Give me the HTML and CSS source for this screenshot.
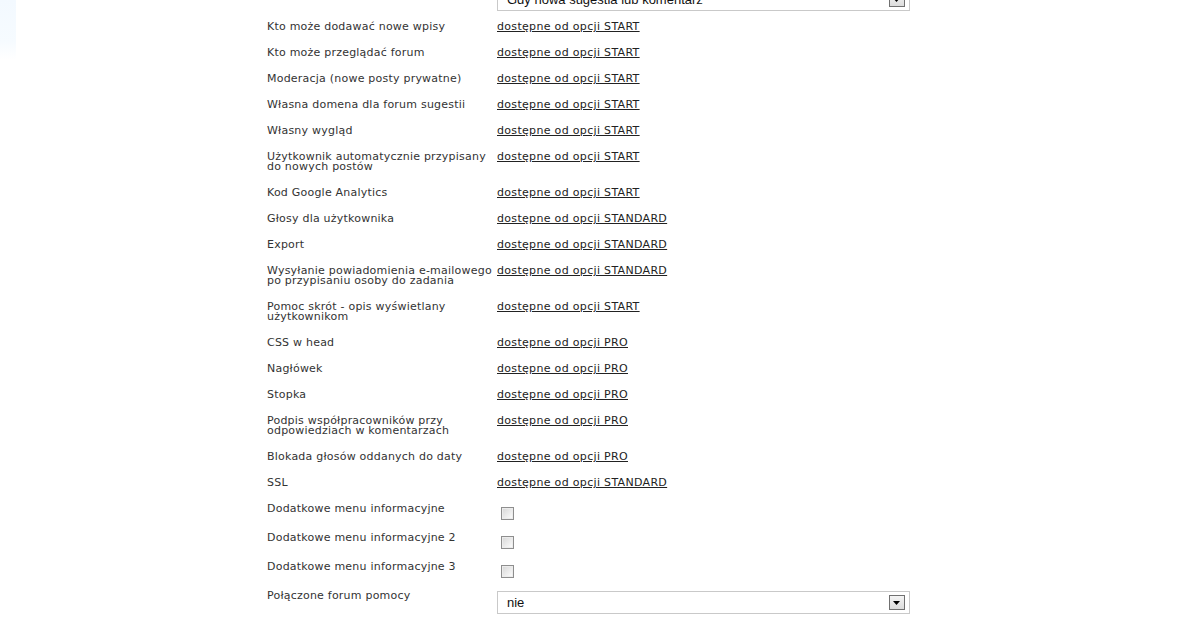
FILE: index.html
```html
<!DOCTYPE html>
<html lang="pl">
<head>
<meta charset="utf-8">
<title>Ustawienia forum</title>
<link rel="stylesheet" href="styles.css">
</head>
<body>
<div class="page">
  <div class="strip"></div>
  <div class="content">
    <div class="row row-select">
      <div class="label">Powiadomienia e-mail</div>
      <div class="value">
        <div class="select"><span class="select-text">Gdy nowa sugestia lub komentarz</span><span class="select-btn"><svg width="8" height="5" viewBox="0 0 8 5"><path d="M0 0h7L3.5 4z" fill="#000"/></svg></span></div>
      </div>
    </div>
    <div class="row"><div class="label">Kto może dodawać nowe wpisy</div><div class="value"><a href="#">dostępne od opcji START</a></div></div>
    <div class="row"><div class="label">Kto może przeglądać forum</div><div class="value"><a href="#">dostępne od opcji START</a></div></div>
    <div class="row"><div class="label">Moderacja (nowe posty prywatne)</div><div class="value"><a href="#">dostępne od opcji START</a></div></div>
    <div class="row"><div class="label">Własna domena dla forum sugestii</div><div class="value"><a href="#">dostępne od opcji START</a></div></div>
    <div class="row"><div class="label">Własny wygląd</div><div class="value"><a href="#">dostępne od opcji START</a></div></div>
    <div class="row"><div class="label">Użytkownik automatycznie przypisany<br>do nowych postów</div><div class="value"><a href="#">dostępne od opcji START</a></div></div>
    <div class="row"><div class="label">Kod Google Analytics</div><div class="value"><a href="#">dostępne od opcji START</a></div></div>
    <div class="row"><div class="label">Głosy dla użytkownika</div><div class="value"><a href="#">dostępne od opcji STANDARD</a></div></div>
    <div class="row"><div class="label">Export</div><div class="value"><a href="#">dostępne od opcji STANDARD</a></div></div>
    <div class="row"><div class="label">Wysyłanie powiadomienia e-mailowego<br>po przypisaniu osoby do zadania</div><div class="value"><a href="#">dostępne od opcji STANDARD</a></div></div>
    <div class="row"><div class="label">Pomoc skrót - opis wyświetlany<br>użytkownikom</div><div class="value"><a href="#">dostępne od opcji START</a></div></div>
    <div class="row"><div class="label">CSS w head</div><div class="value"><a href="#">dostępne od opcji PRO</a></div></div>
    <div class="row"><div class="label">Nagłówek</div><div class="value"><a href="#">dostępne od opcji PRO</a></div></div>
    <div class="row"><div class="label">Stopka</div><div class="value"><a href="#">dostępne od opcji PRO</a></div></div>
    <div class="row"><div class="label">Podpis współpracowników przy<br>odpowiedziach w komentarzach</div><div class="value"><a href="#">dostępne od opcji PRO</a></div></div>
    <div class="row"><div class="label">Blokada głosów oddanych do daty</div><div class="value"><a href="#">dostępne od opcji PRO</a></div></div>
    <div class="row"><div class="label">SSL</div><div class="value"><a href="#">dostępne od opcji STANDARD</a></div></div>
    <div class="row row-check"><div class="label">Dodatkowe menu informacyjne</div><div class="value"><input type="checkbox" class="check"></div></div>
    <div class="row row-check"><div class="label">Dodatkowe menu informacyjne 2</div><div class="value"><input type="checkbox" class="check"></div></div>
    <div class="row row-check"><div class="label">Dodatkowe menu informacyjne 3</div><div class="value"><input type="checkbox" class="check"></div></div>
    <div class="row row-select">
      <div class="label">Połączone forum pomocy</div>
      <div class="value">
        <div class="select"><span class="select-text">nie</span><span class="select-btn"><svg width="8" height="5" viewBox="0 0 8 5"><path d="M0 0h7L3.5 4z" fill="#000"/></svg></span></div>
      </div>
    </div>
  </div>
</div>
</body>
</html>
```
FILE: styles.css
```css
html, body {
  margin: 0;
  padding: 0;
  background: #fff;
  overflow: hidden;
}
.page {
  display: flex;
  align-items: flex-start;
}
.strip {
  width: 16px;
  height: 60px;
  flex: none;
  background: linear-gradient(to bottom, #f3f9ff 0%, #f6fbff 70%, #ffffff 100%);
}
.content {
  margin-top: -20px;
  padding-left: 251px;
  display: flex;
  flex-direction: column;
}
.row {
  display: flex;
  font-family: "DejaVu Sans", Verdana, sans-serif;
  font-size: 11px;
  line-height: 10px;
}
.label {
  width: 230px;
  flex: none;
  color: #333;
  padding: 8px 0;
  white-space: nowrap;
  letter-spacing: 0.22px;
}
.value {
  padding-top: 8px;
  letter-spacing: 0.32px;
}
.value a {
  color: #222;
  text-decoration: underline;
}
.row-check .value {
  padding-top: 11px;
  padding-bottom: 5px;
}
.check {
  -webkit-appearance: none;
  appearance: none;
  display: block;
  margin: 0 0 0 4px;
  width: 13px;
  height: 13px;
  box-sizing: border-box;
  border: 1px solid #8e8e8e;
  background: linear-gradient(135deg, #d6d6d6 0%, #f2f2f2 70%, #ffffff 100%);
  box-shadow: inset 0 0 0 1px #ececec;
}
.row-select .value {
  padding-bottom: 3px;
}
.select {
  width: 413px;
  height: 23px;
  box-sizing: border-box;
  border: 1px solid #c9c9c9;
  background: #fff;
  display: flex;
  align-items: center;
  justify-content: space-between;
  padding: 0 4px 0 9px;
}
.select-text {
  font-family: "Liberation Sans", Arial, sans-serif;
  font-size: 13px;
  line-height: 15px;
  letter-spacing: 0;
  color: #111;
}
.select-btn {
  width: 16px;
  height: 15px;
  box-sizing: border-box;
  border: 1px solid #707070;
  background: linear-gradient(to bottom, #f4f4f4 0%, #dcdcdc 100%);
  display: flex;
  align-items: center;
  justify-content: center;
  padding-top: 2px;
}
```
